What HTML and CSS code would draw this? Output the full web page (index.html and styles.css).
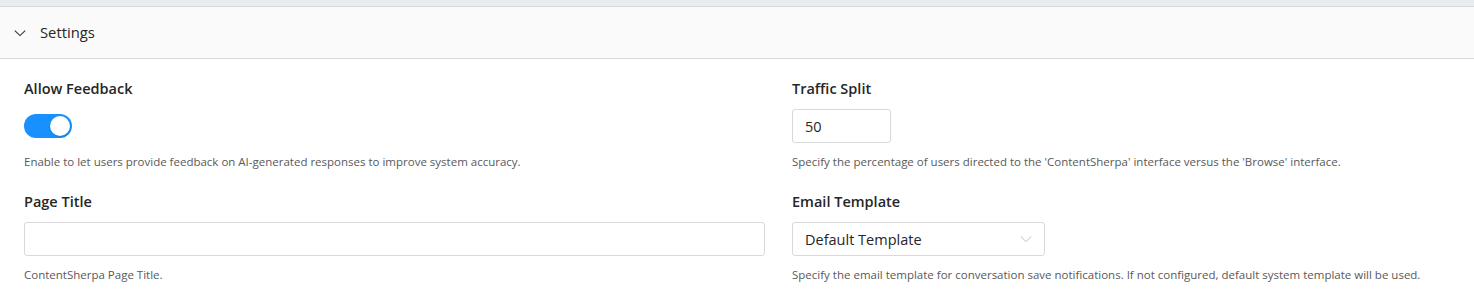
FILE: index.html
```html
<!DOCTYPE html>
<html lang="en">
<head>
    <meta charset="UTF-8">
    <meta name="viewport" content="width=device-width, initial-scale=1.0">
    <title>Settings</title>
    <link rel="stylesheet" href="styles.css">
</head>
<body>

<div class="top-strip"></div>

<section class="panel">
    <div class="panel-header">
        <svg class="chevron" width="12" height="12" viewBox="0 0 12 12">
            <path d="M0.8 3.6 L6 8.6 L11.2 3.6" fill="none" stroke="#333" stroke-width="1.1"/>
        </svg>
        <span class="panel-title">Settings</span>
    </div>

    <div class="panel-body">
        <div class="field">
            <label class="field-label">Allow Feedback</label>
            <div class="control">
                <span class="switch is-on"><span class="knob"></span></span>
            </div>
            <p class="help">Enable to let users provide feedback on AI-generated responses to improve system accuracy.</p>
        </div>

        <div class="field">
            <label class="field-label" for="traffic">Traffic Split</label>
            <div class="control">
                <input type="text" id="traffic" class="input input-small" value="50">
            </div>
            <p class="help">Specify the percentage of users directed to the 'ContentSherpa' interface versus the 'Browse' interface.</p>
        </div>

        <div class="field">
            <label class="field-label" for="page_title">Page Title</label>
            <div class="control">
                <input type="text" id="page_title" class="input">
            </div>
            <p class="help">ContentSherpa Page Title.</p>
        </div>

        <div class="field">
            <label class="field-label">Email Template</label>
            <div class="control">
                <div class="select">
                    <span>Default Template</span>
                    <svg width="12" height="12" viewBox="0 0 12 12">
                        <path d="M0.8 3.5 L6 8.7 L11.2 3.5" fill="none" stroke="#bfbfbf" stroke-width="1"/>
                    </svg>
                </div>
            </div>
            <p class="help">Specify the email template for conversation save notifications. If not configured, default system template will be used.</p>
        </div>
    </div>
</section>

</body>
</html>
```

FILE: styles.css
```css
body {
    font-family: "Segoe UI", "Open Sans", "Noto Sans", sans-serif;
    margin: 0;
    padding: 0;
    background-color: #fff;
    color: #262626;
}

.top-strip {
    height: 6px;
    background-color: #e9ecf1;
    border-bottom: 1px solid #d9d9d9;
}

.panel-header {
    height: 52px;
    background-color: #fafafa;
    border-bottom: 1px solid #d9d9d9;
    display: flex;
    align-items: center;
    padding-left: 14px;
    padding-bottom: 2px;
    box-sizing: border-box;
}

.chevron {
    margin-right: 14px;
    margin-top: 2px;
}

.panel-title {
    font-size: 14.8px;
    color: #262626;
}

.panel-body {
    display: grid;
    grid-template-columns: 741px 1fr;
    column-gap: 27px;
    row-gap: 20px;
    padding: 19px 24px 0;
}

.field-label {
    display: block;
    font-size: 14.5px;
    font-weight: 600;
    line-height: 22px;
    color: #262626;
}

.control {
    margin-top: 9px;
    height: 34px;
    display: flex;
    align-items: center;
}

.switch {
    width: 48px;
    height: 24px;
    border-radius: 12px;
    background-color: #1890ff;
    position: relative;
    box-sizing: border-box;
}

.knob {
    position: absolute;
    top: 2px;
    right: 2px;
    width: 20px;
    height: 20px;
    border-radius: 50%;
    background-color: #fff;
    box-shadow: 0 1px 2px rgba(0, 35, 11, 0.2);
}

.input {
    width: 100%;
    height: 34px;
    box-sizing: border-box;
    border: 1px solid #d9d9d9;
    border-radius: 3px;
    padding: 0 12px;
    font-family: inherit;
    font-size: 14.5px;
    color: #262626;
    background-color: #fff;
}

.input-small {
    width: 99px;
}

.select {
    width: 253px;
    height: 34px;
    box-sizing: border-box;
    border: 1px solid #d9d9d9;
    border-radius: 3px;
    padding: 0 12px;
    display: flex;
    align-items: center;
    justify-content: space-between;
    font-size: 14.5px;
    color: #262626;
}

.help {
    margin: 10px 0 0;
    font-size: 11.5px;
    line-height: 18px;
    color: #595959;
}
```
